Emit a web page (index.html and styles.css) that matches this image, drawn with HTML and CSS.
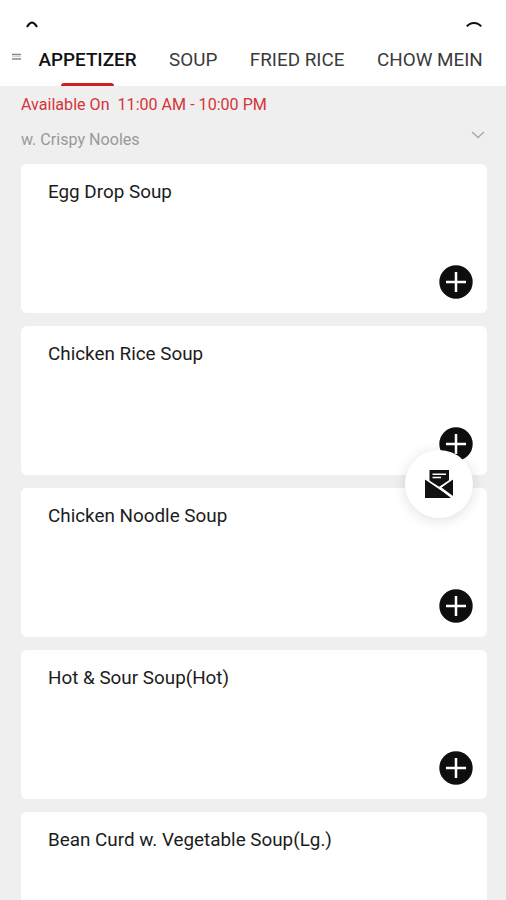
FILE: index.html
```html
<!DOCTYPE html>
<html lang="en">
<head>
<meta charset="utf-8">
<title>Menu</title>
<link rel="stylesheet" href="styles.css">
</head>
<body>
<div class="app">
  <header class="header">
    <div class="topbar">
      <svg class="icon-back" viewBox="0 0 12 7"><path d="M1 6C2.500 3.500 3.500 1.600 6 1.600S9.500 3.500 11 6"/></svg>
      <svg class="icon-search" viewBox="0 0 16 7"><path d="M.8 5.400C4.500.8 11.500.8 15.200 5.400"/></svg>
    </div>
    <nav class="tabs">
      <svg class="icon-list" viewBox="0 0 9 8"><path d="M0 1.500H9M0 6H9"/><path class="faint" d="M0 3.700H9"/></svg>
      <a class="tab tab-active">APPETIZER</a>
      <a class="tab">SOUP</a>
      <a class="tab">FRIED RICE</a>
      <a class="tab">CHOW MEIN</a>
    </nav>
  </header>
  <p class="hours">Available On&nbsp; 11:00 AM - 10:00 PM</p>
  <div class="note"><span>w. Crispy Nooles</span>
    <svg class="icon-chevron" viewBox="0 0 14 8"><path d="M1 1L7 6.500L13 1"/></svg>
  </div>
  <main class="items">
    <article class="card"><h2 class="name">Egg Drop Soup</h2><svg class="add" viewBox="0 0 34 34"><circle cx="17" cy="17" r="16.700"/><path d="M17 7V27M7 17H27"/></svg></article>
    <article class="card"><h2 class="name">Chicken Rice Soup</h2><svg class="add" viewBox="0 0 34 34"><circle cx="17" cy="17" r="16.700"/><path d="M17 7V27M7 17H27"/></svg></article>
    <article class="card"><h2 class="name">Chicken Noodle Soup</h2><svg class="add" viewBox="0 0 34 34"><circle cx="17" cy="17" r="16.700"/><path d="M17 7V27M7 17H27"/></svg></article>
    <article class="card"><h2 class="name">Hot &amp; Sour Soup(Hot)</h2><svg class="add" viewBox="0 0 34 34"><circle cx="17" cy="17" r="16.700"/><path d="M17 7V27M7 17H27"/></svg></article>
    <article class="card"><h2 class="name">Bean Curd w. Vegetable Soup(Lg.)</h2><svg class="add" viewBox="0 0 34 34"><circle cx="17" cy="17" r="16.700"/><path d="M17 7V27M7 17H27"/></svg></article>
  </main>
  <button class="fab" aria-label="Order">
    <svg class="icon-mail" viewBox="0 0 28 28"><path class="solid" d="M4.500 0H24V11.500L14.500 17L4.500 11.500Z"/><path class="solid" d="M0 9L14 18L26 28H0ZM28 9V26L16.500 17.500Z"/><path class="line" d="M7.500 4.200H21M7.500 7.500H16M0 8.500L14 18L28 28M28 8.500L14 18"/></svg>
  </button>
</div>
</body>
</html>
```
FILE: styles.css
```css
* { box-sizing: border-box; }
body { margin: 0; font-family: Roboto, sans-serif; background: #efefef; }
.app { position: relative; height: 900px; overflow: hidden; }
.header { height: 86px; background: #fff; }
.topbar { height: 36px; padding: 21px 24px 0 26px; display: flex; justify-content: space-between; }
svg { display: block; flex: none; }
.topbar path { fill: none; stroke: #111; stroke-width: 2; }
.icon-back { width: 12px; height: 7px; }
.icon-search { width: 16px; height: 7px; }
.tabs { height: 50px; padding-left: 12px; display: flex; white-space: nowrap; }
.icon-list { width: 9px; height: 8px; margin: 17px 17.500px 0 0; }
.icon-list path { stroke: #888; stroke-width: 1.600; }
.icon-list .faint { stroke: #ccc; stroke-width: 1; }
.tab { position: relative; margin-right: 32.500px; font-size: 18.850px; line-height: 49px; color: #3a3a3a; }
.tab-active { color: #111; font-weight: 500; }
.tab-active::after { content: ""; position: absolute; left: 22px; bottom: 0; width: 53px; height: 3px; border-radius: 3px 3px 0 0; background: #d11c20; }
.hours { margin: 0; padding: 9px 21px 0; height: 36px; font-size: 16.100px; line-height: 20px; color: #d5343b; }
.note { height: 42px; padding: 8px 21px 0; display: flex; justify-content: space-between; font-size: 16.100px; line-height: 20px; color: #999; }
.icon-chevron { width: 14px; height: 8px; margin-top: 1px; }
.icon-chevron path { fill: none; stroke: #aaa; stroke-width: 1.600; }
.items { padding: 0 19px 0 21px; display: grid; gap: 13px; }
.card { height: 149px; padding: 16px 14px 14px 27px; border-radius: 6px; background: #fff; display: flex; flex-direction: column; justify-content: space-between; }
.name { margin: 0; font-size: 18.850px; line-height: 24px; font-weight: 400; color: #1c1c1c; white-space: nowrap; }
.add { width: 34px; height: 34px; align-self: flex-end; }
.add circle { fill: #0e0e0e; }
.add path { stroke: #fff; stroke-width: 2.500; }
.fab { position: absolute; left: 405px; top: 450px; width: 68px; height: 68px; padding: 0; border: 0; border-radius: 50%; background: #fff; box-shadow: 0 2px 14px rgba(0,0,0,.13); display: grid; place-items: center; }
.icon-mail { width: 28px; height: 28px; }
.icon-mail .solid { fill: #111; }
.icon-mail .line { fill: none; stroke: #fff; stroke-width: 1.600; }
```
